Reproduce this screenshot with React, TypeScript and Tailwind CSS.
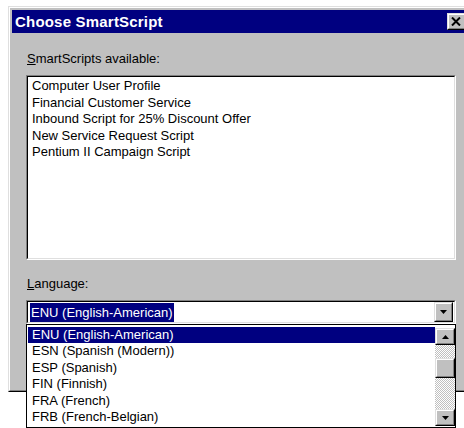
import React from "react";

const scripts = [
  "Computer User Profile",
  "Financial Customer Service",
  "Inbound Script for 25% Discount Offer",
  "New Service Request Script",
  "Pentium II Campaign Script",
];

const languages = [
  "ENU (English-American)",
  "ESN (Spanish (Modern))",
  "ESP (Spanish)",
  "FIN (Finnish)",
  "FRA (French)",
  "FRB (French-Belgian)",
];

function Sunken({ className, children }: { className?: string; children?: React.ReactNode }) {
  return (
    <div className={`border border-t-[#808080] border-l-[#808080] border-b-white border-r-white ${className ?? ""}`}>
      <div className="flex h-full w-full border border-t-black border-l-black border-b-[#dfdfdf] border-r-[#dfdfdf] bg-white">
        {children}
      </div>
    </div>
  );
}

function RaisedButton({ className, children }: { className?: string; children?: React.ReactNode }) {
  return (
    <div className={`border border-t-[#dfdfdf] border-l-[#dfdfdf] border-b-black border-r-black ${className ?? ""}`}>
      <div className="flex h-full w-full items-center justify-center border border-t-white border-l-white border-b-[#808080] border-r-[#808080] bg-[#c0c0c0]">
        {children}
      </div>
    </div>
  );
}

function Arrow({ up }: { up?: boolean }) {
  return (
    <svg width="7" height="4" viewBox="0 0 7 4" className="block">
      <polygon points={up ? "3.5,0 7,4 0,4" : "0,0 7,0 3.5,4"} fill="#000" />
    </svg>
  );
}

const dither =
  "bg-[repeating-conic-gradient(#c0c0c0_0_25%,#ffffff_0_50%)] bg-[length:2px_2px]";

export default function App() {
  return (
    <div className="relative h-[428px] w-[464px] overflow-hidden bg-white font-['Liberation_Sans',Arial,sans-serif] text-[13px] text-black">
      {/* dialog frame */}
      <div className="ml-[8px] mt-[6px] h-[386px] w-[465px] border border-t-[#dfdfdf] border-l-[#dfdfdf] border-b-black border-r-black">
        <div className="flex h-full flex-col border border-t-white border-l-white border-b-[#808080] border-r-[#808080] bg-[#c0c0c0] p-[2px]">
          <div className="flex h-[23px] shrink-0 items-center bg-[#000080] pl-[3px] pr-[2px]">
            <span className="text-[15px] font-bold leading-none tracking-[0.2px] text-white">Choose SmartScript</span>
            <div className="flex-1" />
            <RaisedButton className="h-[17px] w-[20px]">
              <svg width="10" height="9" viewBox="0 0 10 9" className="mr-[2px] block">
                <path d="M1 0.5 L9 8.5 M9 0.5 L1 8.5" stroke="#000" strokeWidth="2" />
              </svg>
            </RaisedButton>
          </div>

          <div className="flex flex-col px-[14px] pt-[18px]">
            <p className="pl-[1px] leading-[16px]">
              <span className="underline">S</span>martScripts available:
            </p>
            <Sunken className="mt-[8px] h-[185px] w-[430px]">
              <ul className="flex flex-col pl-[4px] pt-[1px]">
                {scripts.map((s) => (
                  <li key={s} className="leading-[16.5px]">
                    {s}
                  </li>
                ))}
              </ul>
            </Sunken>

            <p className="mt-[16px] pl-[1px] leading-[16px]">
              <span className="underline">L</span>anguage:
            </p>
            <Sunken className="mt-[8px] h-[24px] w-[430px]">
              <div className="flex flex-1 items-center pl-[2px]">
                <span className="bg-[#000080] px-[1px] leading-[19px] text-white">{languages[0]}</span>
              </div>
              <RaisedButton className="mr-[1px] h-[20px] w-[19px]">
                <Arrow />
              </RaisedButton>
            </Sunken>
          </div>
        </div>
      </div>

      {/* open combo list */}
      <div className="absolute left-[26px] top-[324px] flex h-[104px] w-[430px] border border-black bg-white">
        <ul className="flex flex-1 flex-col pl-[1px] pt-[2px]">
          {languages.map((l, i) => (
            <li
              key={l}
              className={`pl-[4px] leading-[16.4px] ${i === 0 ? "bg-[#000080] text-white" : ""}`}
            >
              {l}
            </li>
          ))}
        </ul>
        <div className="mb-[1px] mt-[3px] flex w-[20px] flex-col">
          <RaisedButton className="h-[17px] w-full">
            <Arrow up />
          </RaisedButton>
          <div className={`h-[13px] ${dither}`} />
          <RaisedButton className="h-[20px] w-full" />
          <div className={`flex-1 ${dither}`} />
          <RaisedButton className="h-[17px] w-full">
            <Arrow />
          </RaisedButton>
        </div>
      </div>
    </div>
  );
}
